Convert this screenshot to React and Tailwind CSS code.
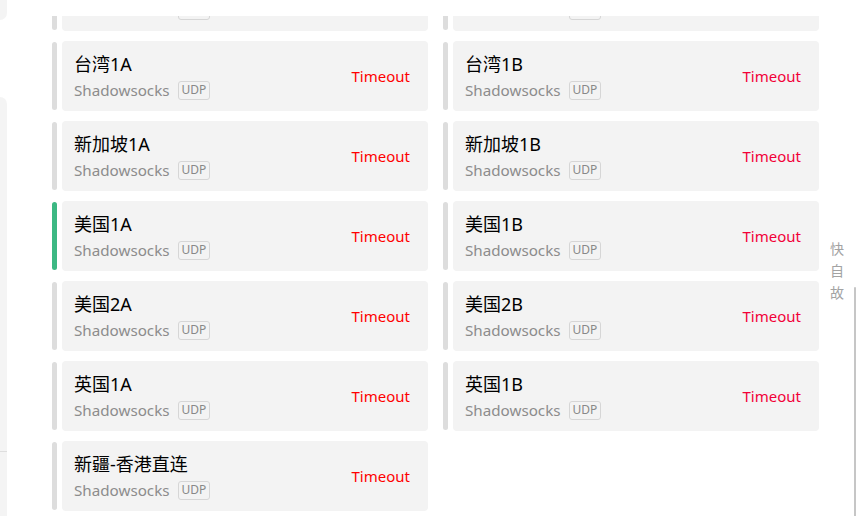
import React from 'react';

const nodes = [
  { name: '香港1A', bar: 'gray' },
  { name: '香港1B', bar: 'gray' },
  { name: '台湾1A', bar: 'gray' },
  { name: '台湾1B', bar: 'gray' },
  { name: '新加坡1A', bar: 'gray' },
  { name: '新加坡1B', bar: 'gray' },
  { name: '美国1A', bar: 'green' },
  { name: '美国1B', bar: 'gray' },
  { name: '美国2A', bar: 'gray' },
  { name: '美国2B', bar: 'gray' },
  { name: '英国1A', bar: 'gray' },
  { name: '英国1B', bar: 'gray' },
  { name: '新疆-香港直连', bar: 'gray' },
];

const NodeCard = ({ name, bar, right }) => {
  return (
    <div className="flex h-[70px] gap-[5px]">
      <div
        className={
          bar === 'green'
            ? 'w-[5px] my-[1px] rounded-full bg-[#3cb883]'
            : 'w-[5px] my-[1px] rounded-full bg-[#dddddd]'
        }
      />
      <div className="flex-1 flex items-center justify-between rounded-[4px] bg-[#f3f3f3] pl-3 pr-[18px]">
        <div className="flex flex-col self-start pt-[11px]">
          <div className="text-[18px] leading-[24px] text-black">{name}</div>
          <div className="mt-[3px] flex h-[22px] items-center gap-2">
            <span className="text-[15.2px] leading-[22px] text-[#8c8c8c]">Shadowsocks</span>
            <span className="flex h-[19px] items-center rounded-[3px] border border-[#d6d6d6] px-[3px] text-[12px] leading-none text-[#888888]">
              UDP
            </span>
          </div>
        </div>
        <div className={right ? 'text-[15px] text-[#f20038]' : 'text-[15px] text-[#ff0000]'}>Timeout</div>
      </div>
    </div>
  );
};

export default function App() {
  return (
    <div
      className="relative flex h-[516px] w-[856px] overflow-hidden bg-white"
      style={{ fontFamily: '"Noto Sans", "Noto Sans CJK SC", sans-serif' }}
    >
      <div className="flex w-[7px] flex-col">
        <div className="h-[20px] rounded-br-[8px] bg-[#f4f4f4]" />
        <div className="h-[77px]" />
        <div className="flex flex-1 flex-col rounded-tr-[8px] bg-[#f4f4f4]">
          <div className="h-[354px]" />
          <div className="flex-1 border-t border-[#dedede]" />
        </div>
      </div>

      <div className="ml-[45px] w-[767px]">
        <div className="-mt-[39px] grid grid-cols-2 gap-x-[15px] gap-y-[10px]">
          {nodes.map((n, i) => (
            <NodeCard key={n.name} name={n.name} bar={n.bar} right={i % 2 === 1} />
          ))}
        </div>
      </div>

      <div className="absolute left-[40px] top-0 h-[16px] w-[790px] bg-white" />

      <div className="absolute left-[830px] top-[238px] flex flex-col text-[14px] leading-[22px] text-[#a3a3a3]">
        <span>快</span>
        <span>自</span>
        <span>故</span>
      </div>
      <div className="absolute left-[854px] top-[287px] h-[240px] w-[2px] rounded-t-full bg-[#c6c6c6]" />
    </div>
  );
}
